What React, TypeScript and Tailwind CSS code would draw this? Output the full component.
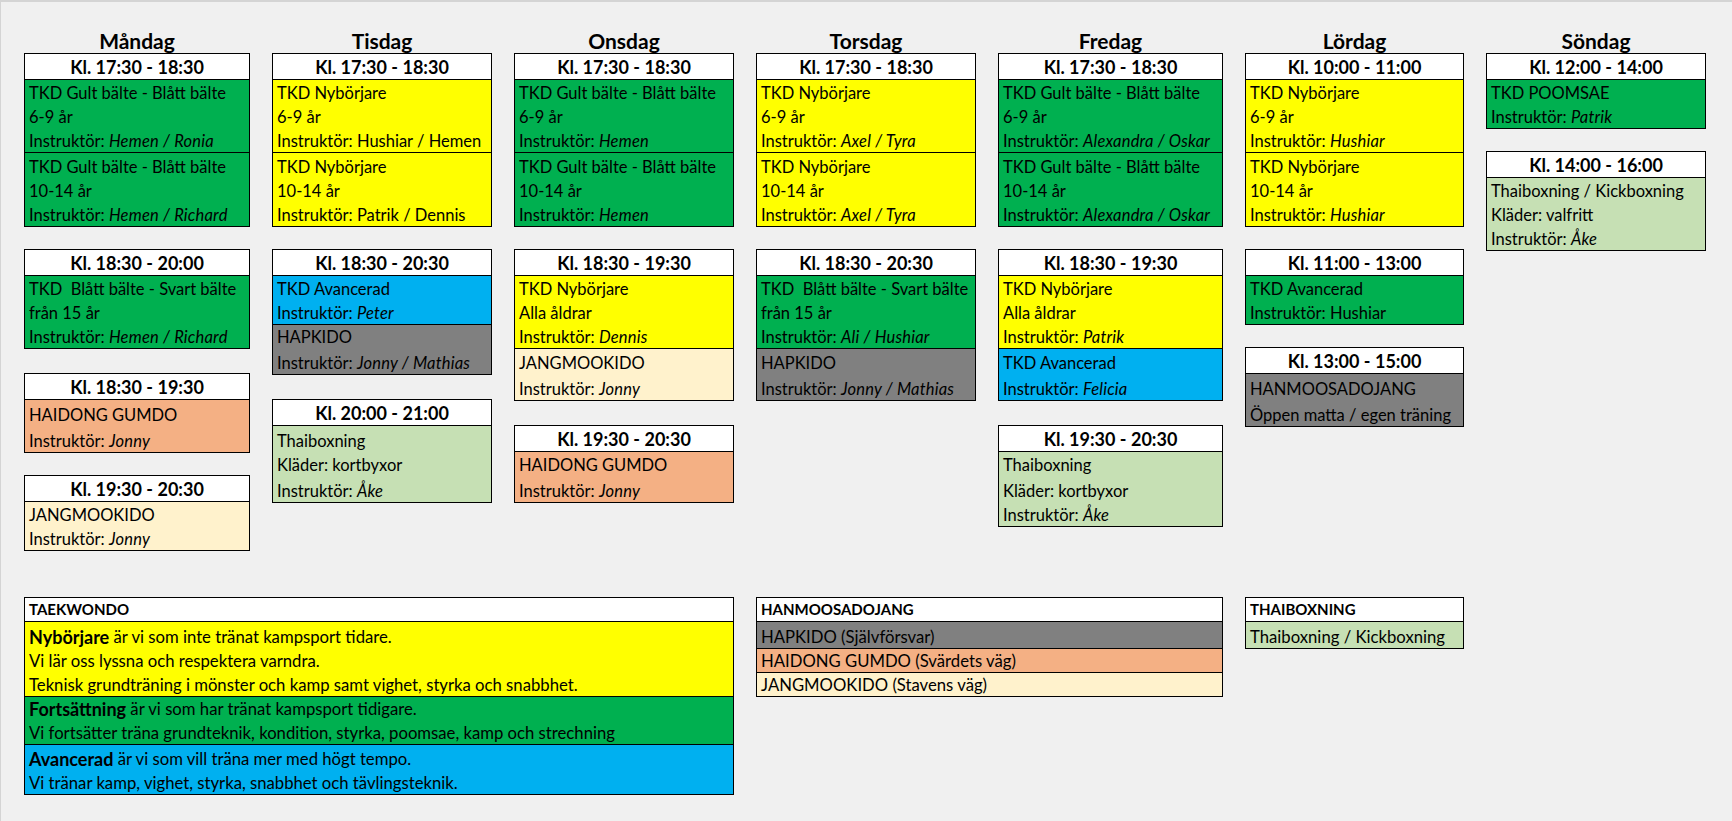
import React from "react";

type Line = string | [string, string];
type Section = { bg: string; lines: Line[] };
type Block = { gap: true } | { time: string; sections: Section[] };

// row heights of the sheet, from the first time row down
const ROWS = [
  "h-[26px]",
  "h-[24px]",
  "h-[24px]",
  "h-[24px]",
  "h-[26px]",
  "h-[24px]",
  "h-[24px]",
  "h-[24px]",
  "h-[26px]",
  "h-[24px]",
  "h-[24px]",
  "h-[24px]",
  "h-[26px]",
  "h-[26px]",
  "h-[26px]",
  "h-[26px]",
  "h-[24px]",
  "h-[26px]",
  "h-[24px]",
  "h-[24px]",
];

const GREEN = "bg-[#00b050]";
const YELLOW = "bg-[#ffff00]";
const BLUE = "bg-[#00b0f0]";
const GRAY = "bg-[#808080]";
const ORANGE = "bg-[#f4b084]";
const CREAM = "bg-[#fff2cc]";
const LIGHT = "bg-[#c6e0b4]";

const GAP: Block = { gap: true };

const days: { name: string; width: string; blocks: Block[] }[] = [
  {
    name: "Måndag",
    width: "w-[224px]",
    blocks: [
      {
        time: "Kl. 17:30 - 18:30",
        sections: [
          { bg: GREEN, lines: ["TKD Gult bälte - Blått bälte", "6-9 år", ["Instruktör: ", "Hemen / Ronia"]] },
          { bg: GREEN, lines: ["TKD Gult bälte - Blått bälte", "10-14 år", ["Instruktör: ", "Hemen / Richard"]] },
        ],
      },
      GAP,
      {
        time: "Kl. 18:30 - 20:00",
        sections: [
          { bg: GREEN, lines: ["TKD  Blått bälte - Svart bälte", "från 15 år", ["Instruktör: ", "Hemen / Richard"]] },
        ],
      },
      GAP,
      {
        time: "Kl. 18:30 - 19:30",
        sections: [{ bg: ORANGE, lines: ["HAIDONG GUMDO", ["Instruktör: ", "Jonny"]] }],
      },
      GAP,
      {
        time: "Kl. 19:30 - 20:30",
        sections: [{ bg: CREAM, lines: ["JANGMOOKIDO", ["Instruktör: ", "Jonny"]] }],
      },
    ],
  },
  {
    name: "Tisdag",
    width: "w-[218px]",
    blocks: [
      {
        time: "Kl. 17:30 - 18:30",
        sections: [
          { bg: YELLOW, lines: ["TKD Nybörjare", "6-9 år", "Instruktör: Hushiar / Hemen"] },
          { bg: YELLOW, lines: ["TKD Nybörjare", "10-14 år", "Instruktör: Patrik / Dennis"] },
        ],
      },
      GAP,
      {
        time: "Kl. 18:30 - 20:30",
        sections: [
          { bg: BLUE, lines: ["TKD Avancerad", ["Instruktör: ", "Peter"]] },
          { bg: GRAY, lines: ["HAPKIDO", ["Instruktör: ", "Jonny / Mathias"]] },
        ],
      },
      GAP,
      {
        time: "Kl. 20:00 - 21:00",
        sections: [{ bg: LIGHT, lines: ["Thaiboxning", "Kläder: kortbyxor", ["Instruktör: ", "Åke"]] }],
      },
    ],
  },
  {
    name: "Onsdag",
    width: "w-[218px]",
    blocks: [
      {
        time: "Kl. 17:30 - 18:30",
        sections: [
          { bg: GREEN, lines: ["TKD Gult bälte - Blått bälte", "6-9 år", ["Instruktör: ", "Hemen"]] },
          { bg: GREEN, lines: ["TKD Gult bälte - Blått bälte", "10-14 år", ["Instruktör: ", "Hemen"]] },
        ],
      },
      GAP,
      {
        time: "Kl. 18:30 - 19:30",
        sections: [
          { bg: YELLOW, lines: ["TKD Nybörjare", "Alla åldrar", ["Instruktör: ", "Dennis"]] },
          { bg: CREAM, lines: ["JANGMOOKIDO", ["Instruktör: ", "Jonny"]] },
        ],
      },
      GAP,
      {
        time: "Kl. 19:30 - 20:30",
        sections: [{ bg: ORANGE, lines: ["HAIDONG GUMDO", ["Instruktör: ", "Jonny"]] }],
      },
    ],
  },
  {
    name: "Torsdag",
    width: "w-[218px]",
    blocks: [
      {
        time: "Kl. 17:30 - 18:30",
        sections: [
          { bg: YELLOW, lines: ["TKD Nybörjare", "6-9 år", ["Instruktör: ", "Axel / Tyra"]] },
          { bg: YELLOW, lines: ["TKD Nybörjare", "10-14 år", ["Instruktör: ", "Axel / Tyra"]] },
        ],
      },
      GAP,
      {
        time: "Kl. 18:30 - 20:30",
        sections: [
          { bg: GREEN, lines: ["TKD  Blått bälte - Svart bälte", "från 15 år", ["Instruktör: ", "Ali / Hushiar"]] },
          { bg: GRAY, lines: ["HAPKIDO", ["Instruktör: ", "Jonny / Mathias"]] },
        ],
      },
    ],
  },
  {
    name: "Fredag",
    width: "w-[223px]",
    blocks: [
      {
        time: "Kl. 17:30 - 18:30",
        sections: [
          { bg: GREEN, lines: ["TKD Gult bälte - Blått bälte", "6-9 år", ["Instruktör: ", "Alexandra / Oskar"]] },
          { bg: GREEN, lines: ["TKD Gult bälte - Blått bälte", "10-14 år", ["Instruktör: ", "Alexandra / Oskar"]] },
        ],
      },
      GAP,
      {
        time: "Kl. 18:30 - 19:30",
        sections: [
          { bg: YELLOW, lines: ["TKD Nybörjare", "Alla åldrar", ["Instruktör: ", "Patrik"]] },
          { bg: BLUE, lines: ["TKD Avancerad", ["Instruktör: ", "Felicia"]] },
        ],
      },
      GAP,
      {
        time: "Kl. 19:30 - 20:30",
        sections: [{ bg: LIGHT, lines: ["Thaiboxning", "Kläder: kortbyxor", ["Instruktör: ", "Åke"]] }],
      },
    ],
  },
  {
    name: "Lördag",
    width: "w-[217px]",
    blocks: [
      {
        time: "Kl. 10:00 - 11:00",
        sections: [
          { bg: YELLOW, lines: ["TKD Nybörjare", "6-9 år", ["Instruktör: ", "Hushiar"]] },
          { bg: YELLOW, lines: ["TKD Nybörjare", "10-14 år", ["Instruktör: ", "Hushiar"]] },
        ],
      },
      GAP,
      {
        time: "Kl. 11:00 - 13:00",
        sections: [{ bg: GREEN, lines: ["TKD Avancerad", "Instruktör: Hushiar"] }],
      },
      GAP,
      {
        time: "Kl. 13:00 - 15:00",
        sections: [{ bg: GRAY, lines: ["HANMOOSADOJANG", "Öppen matta / egen träning"] }],
      },
    ],
  },
  {
    name: "Söndag",
    width: "w-[218px]",
    blocks: [
      {
        time: "Kl. 12:00 - 14:00",
        sections: [{ bg: GREEN, lines: ["TKD POOMSAE", ["Instruktör: ", "Patrik"]] }],
      },
      GAP,
      {
        time: "Kl. 14:00 - 16:00",
        sections: [
          { bg: LIGHT, lines: ["Thaiboxning / Kickboxning", "Kläder: valfritt", ["Instruktör: ", "Åke"]] },
        ],
      },
    ],
  },
];

function LineText({ line }: { line: Line }) {
  if (typeof line === "string") return <span className="whitespace-pre">{line}</span>;
  return (
    <span className="whitespace-pre">
      {line[0]}
      <em className="italic tracking-[0.2px]">{line[1]}</em>
    </span>
  );
}

function DayColumn({ name, width, blocks }: { name: string; width: string; blocks: Block[] }) {
  let row = 0;
  return (
    <div className={`flex flex-col ${width}`}>
      <div className="flex h-[24px] items-end justify-center pb-[1px] text-[21px] font-bold leading-[24px] text-black">
        {name}
      </div>
      {blocks.map((b, i) => {
        if ("gap" in b) {
          const h = ROWS[row++];
          return <div key={i} className={h} />;
        }
        const headH = ROWS[row++];
        return (
          <div key={i} className="flex flex-col bg-white ring-1 ring-black">
            <div
              className={`flex ${headH} items-end justify-center border-b border-black pb-[2px] text-[18px] font-bold leading-[20px]`}
            >
              {b.time}
            </div>
            {b.sections.map((s, si) => (
              <div key={si} className={`flex flex-col ${s.bg} ${si > 0 ? "border-t border-black" : ""}`}>
                {s.lines.map((l, li) => {
                  const h = ROWS[row++];
                  return (
                    <div
                      key={li}
                      className={`flex ${h} ${si > 0 && li === 0 ? "-mt-px" : ""} items-end overflow-visible px-[4px] pb-[1px] text-[16.5px] leading-[19px]`}
                    >
                      <LineText line={l} />
                    </div>
                  );
                })}
              </div>
            ))}
          </div>
        );
      })}
    </div>
  );
}

function LegendRow({ h, bg, children, top }: { h: string; bg: string; children: React.ReactNode; top?: boolean }) {
  return (
    <div
      className={`flex ${h} ${bg} ${top ? "border-t border-black" : ""} items-end whitespace-pre px-[4px] pb-[1px] text-[16.7px] leading-[19px]`}
    >
      {children}
    </div>
  );
}

function LegendHead({ title }: { title: string }) {
  return (
    <div className="flex h-[24px] items-end border-b border-black bg-white px-[4px] pb-[3px] text-[15px] font-bold leading-[18px]">
      {title}
    </div>
  );
}

export default function App() {
  return (
    <div
      className="h-[821px] w-[1732px] overflow-hidden border-l border-t-2 border-[#d4d4d4] bg-[#f0f0f0] pl-[24px] pt-[28px] text-black"
      style={{ fontFamily: "Lato, 'Open Sans', sans-serif" }}
    >
      <div className="flex gap-[24px]">
        {days.map((d) => (
          <DayColumn key={d.name} {...d} />
        ))}
      </div>

      <div className="mt-[48px] grid grid-cols-[224px_218px_218px_218px_223px_217px_218px] items-start gap-x-[24px]">
        <div className="col-span-3 flex flex-col ring-1 ring-black">
          <LegendHead title="TAEKWONDO" />
          <LegendRow h="h-[26px]" bg={YELLOW}>
            <b className="text-[18px] font-bold">Nybörjare</b> är vi som inte tränat kampsport tidare.
          </LegendRow>
          <LegendRow h="h-[24px]" bg={YELLOW}>
            Vi lär oss lyssna och respektera varndra.
          </LegendRow>
          <LegendRow h="h-[24px]" bg={YELLOW}>
            Teknisk grundträning i mönster och kamp samt vighet, styrka och snabbhet.
          </LegendRow>
          <LegendRow h="h-[24px]" bg={GREEN} top>
            <b className="text-[18px] font-bold">Fortsättning</b> är vi som har tränat kampsport tidigare.
          </LegendRow>
          <LegendRow h="h-[24px]" bg={GREEN}>
            Vi fortsätter träna grundteknik, kondition, styrka, poomsae, kamp och strechning
          </LegendRow>
          <LegendRow h="h-[26px]" bg={BLUE} top>
            <b className="text-[18px] font-bold">Avancerad</b> är vi som vill träna mer med högt tempo.
          </LegendRow>
          <LegendRow h="h-[24px]" bg={BLUE}>
            Vi tränar kamp, vighet, styrka, snabbhet och tävlingsteknik.
          </LegendRow>
        </div>

        <div className="col-span-2 flex flex-col ring-1 ring-black">
          <LegendHead title="HANMOOSADOJANG" />
          <LegendRow h="h-[26px]" bg={GRAY}>
            HAPKIDO (Självförsvar)
          </LegendRow>
          <LegendRow h="h-[24px]" bg={ORANGE} top>
            HAIDONG GUMDO (Svärdets väg)
          </LegendRow>
          <LegendRow h="h-[24px]" bg={CREAM} top>
            JANGMOOKIDO (Stavens väg)
          </LegendRow>
        </div>

        <div className="col-span-1 flex flex-col ring-1 ring-black">
          <LegendHead title="THAIBOXNING" />
          <LegendRow h="h-[26px]" bg={LIGHT}>
            Thaiboxning / Kickboxning
          </LegendRow>
        </div>
      </div>
    </div>
  );
}
